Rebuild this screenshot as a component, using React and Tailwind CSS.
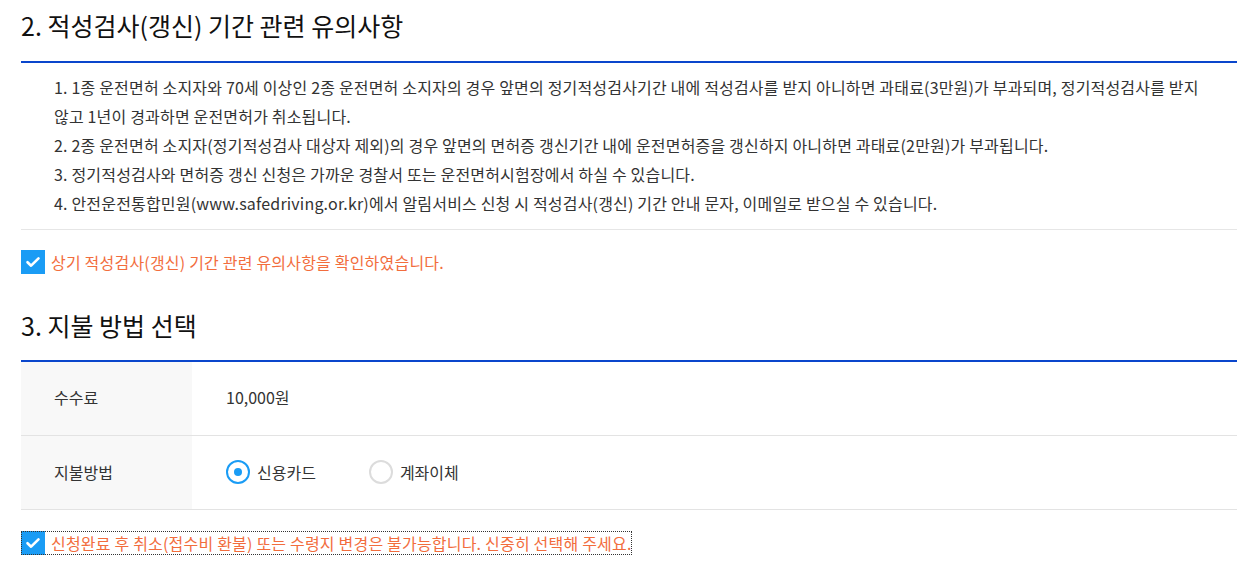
import React, { useState } from 'react';

const notices = [
    '1. 1종 운전면허 소지자와 70세 이상인 2종 운전면허 소지자의 경우 앞면의 정기적성검사기간 내에 적성검사를 받지 아니하면 과태료(3만원)가 부과되며, 정기적성검사를 받지 않고 1년이 경과하면 운전면허가 취소됩니다.',
    '2. 2종 운전면허 소지자(정기적성검사 대상자 제외)의 경우 앞면의 면허증 갱신기간 내에 운전면허증을 갱신하지 아니하면 과태료(2만원)가 부과됩니다.',
    '3. 정기적성검사와 면허증 갱신 신청은 가까운 경찰서 또는 운전면허시험장에서 하실 수 있습니다.',
    '4. 안전운전통합민원(www.safedriving.or.kr)에서 알림서비스 신청 시 적성검사(갱신) 기간 안내 문자, 이메일로 받으실 수 있습니다.',
];

const CheckBox = ({ checked }) => (
    <span className={`w-[24px] h-[24px] shrink-0 flex items-center justify-center ${checked ? 'bg-[#1a9cf5]' : 'bg-white border border-[#ccc]'}`}>
        {checked && (
            <svg width="18" height="18" viewBox="0 0 18 18" fill="none">
                <path d="M3.5 9.2l3.6 3.5L14.5 5.3" stroke="#fff" strokeWidth="2.6" strokeLinecap="round" strokeLinejoin="round" />
            </svg>
        )}
    </span>
);

const Radio = ({ checked, label, onClick }) => (
    <button type="button" onClick={onClick} className="flex items-center gap-[7px] cursor-pointer">
        <span className={`w-[24px] h-[24px] rounded-full flex items-center justify-center bg-white ${checked ? 'border-2 border-[#1a9cf5]' : 'border-2 border-[#dcdcdc]'}`}>
            {checked && <span className="w-[8px] h-[8px] rounded-full bg-[#1a9cf5]" />}
        </span>
        <span className="text-[16px] text-[#333]">{label}</span>
    </button>
);

const App = () => {
    const [pay, setPay] = useState('card');

    return (
        <div className="w-full min-h-screen bg-white pl-[21px] pr-[16px] font-['Noto_Sans_CJK_KR','Noto_Sans',sans-serif] text-[#333]">
            {/* 2. 적성검사 유의사항 */}
            <h2 className="pt-[7px] text-[25px] leading-[36px] text-[#111] mb-[18px]">2. 적성검사(갱신) 기간 관련 유의사항</h2>
            <div className="border-t-2 border-[#0a46cc]">
                <ul className="pl-[33px] pr-[20px] pt-[10px] pb-[11px] border-b border-[#e6e6e6] text-[16px] leading-[29px] tracking-[0.18px]">
                    {notices.map((n) => (
                        <li key={n}>{n}</li>
                    ))}
                </ul>
            </div>
            <label className="mt-[20px] flex items-center gap-[6px] text-[16px] text-[#f26d3d] tracking-[0.2px]">
                <CheckBox checked />
                상기 적성검사(갱신) 기간 관련 유의사항을 확인하였습니다.
            </label>

            {/* 3. 지불 방법 선택 */}
            <h2 className="mt-[33px] text-[25px] leading-[36px] text-[#111] mb-[17px]">3. 지불 방법 선택</h2>
            <div className="border-t-2 border-[#0a46cc]">
                <div className="flex h-[74px] border-b border-[#e3e3e3]">
                    <div className="w-[171px] bg-[#f8f8f8] pl-[33px] flex items-center text-[16px] pb-[3px]">수수료</div>
                    <div className="flex-1 pl-[34px] flex items-center text-[16px] pb-[3px]">10,000원</div>
                </div>
                <div className="flex h-[74px] border-b border-[#e3e3e3]">
                    <div className="w-[171px] bg-[#f8f8f8] pl-[33px] flex items-center text-[16px] pb-[2px]">지불방법</div>
                    <div className="flex-1 pl-[34px] flex items-center gap-[53px] pb-[2px]">
                        <Radio checked={pay === 'card'} label="신용카드" onClick={() => setPay('card')} />
                        <Radio checked={pay === 'bank'} label="계좌이체" onClick={() => setPay('bank')} />
                    </div>
                </div>
            </div>
            <label className="mt-[21px] inline-flex items-center gap-[6px] text-[16px] text-[#f26d3d] tracking-[0.2px] outline-1 outline-dotted outline-[#333] outline-offset-[-1px]">
                <CheckBox checked />
                신청완료 후 취소(접수비 환불) 또는 수령지 변경은 불가능합니다. 신중히 선택해 주세요.
            </label>
        </div>
    );
};

export default App;
